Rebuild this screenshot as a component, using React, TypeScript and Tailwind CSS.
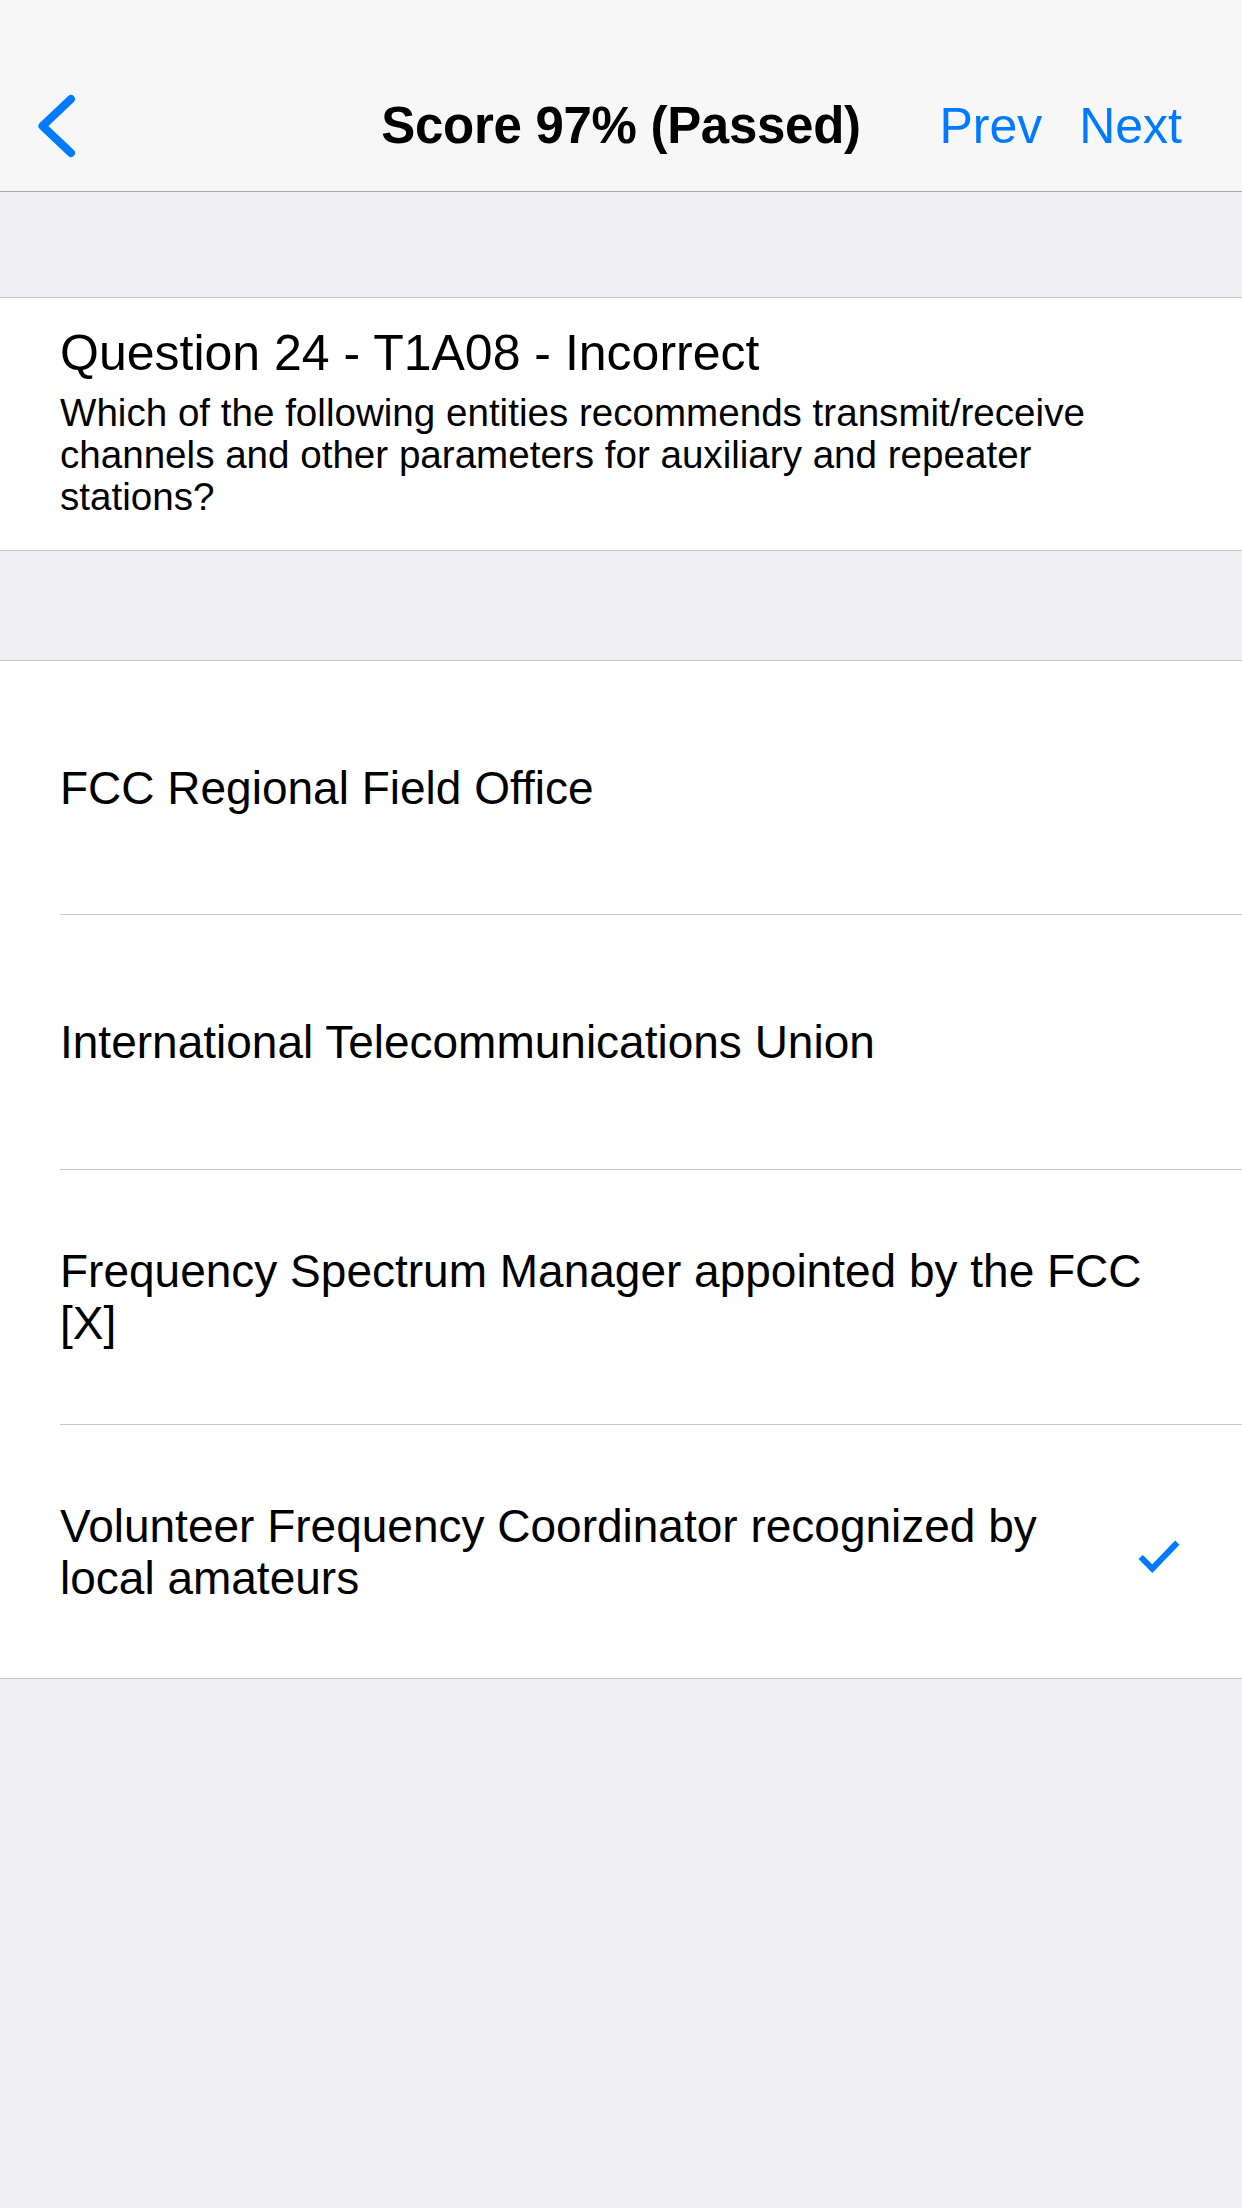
const options = [
  { text: "FCC Regional Field Office", checked: false },
  { text: "International Telecommunications Union", checked: false },
  { text: "Frequency Spectrum Manager appointed by the FCC [X]", checked: false },
  { text: "Volunteer Frequency Coordinator recognized by local amateurs", checked: true },
];

function Chevron() {
  return (
    <svg width="44" height="64" viewBox="0 0 44 64" fill="none">
      <polyline
        points="37,5 8.5,32 37,59"
        stroke="#007aff"
        strokeWidth="8"
        strokeLinecap="round"
        strokeLinejoin="round"
        fill="none"
      />
    </svg>
  );
}

function Check() {
  return (
    <svg width="44" height="44" viewBox="0 0 44 44" fill="none">
      <polyline
        points="3.7,27 15.3,38.7 40.3,12.7"
        stroke="#007aff"
        strokeWidth="6"
        strokeLinecap="butt"
        strokeLinejoin="miter"
        fill="none"
      />
    </svg>
  );
}

export default function App() {
  return (
    <div className="min-h-screen w-full bg-[#efeff4] font-['Liberation_Sans',Arial,sans-serif] text-black">
      <header className="bg-[#f7f7f7] border-b border-[#a9a9ae]">
        <div className="h-[60px]" />
        <div className="h-[131px] grid grid-cols-[1fr_auto_1fr] items-center">
          <div className="pl-[34px] flex items-center">
            <Chevron />
          </div>
          <h1 className="text-[51px] font-bold leading-none tracking-[-0.3px]">Score 97% (Passed)</h1>
          <div className="flex justify-end items-center gap-[37px] pr-[60px] text-[50px] leading-none text-[#007aff]">
            <span>Prev</span>
            <span>Next</span>
          </div>
        </div>
      </header>

      <div className="h-[105px]" />

      <section className="bg-white border-y border-[#c8c7cc] pl-[60px] pr-[100px] pt-[27px] pb-[32px]">
        <div className="text-[50px] leading-[56px]">Question 24 - T1A08 - Incorrect</div>
        <div className="mt-[11px] text-[38.6px] leading-[42px]">
          Which of the following entities recommends transmit/receive channels and other parameters for auxiliary
          and repeater stations?
        </div>
      </section>

      <div className="h-[109px]" />

      <section className="bg-white border-y border-[#c8c7cc]">
        {options.map((o, i) => (
          <div key={i} className="pl-[60px]">
            <div
              className={
                i === 0
                  ? "h-[254px] border-b border-[#c8c7cc] flex items-center"
                  : i < 3
                  ? "h-[255px] border-b border-[#c8c7cc] flex items-center"
                  : "h-[253px] flex items-center"
              }
            >
              {o.checked ? (
                <>
                  <div className="flex-1 pr-[37px] text-[46px] leading-[52px]">{o.text}</div>
                  <div className="mr-[61px] flex items-center">
                    <Check />
                  </div>
                </>
              ) : (
                <div className="flex-1 pr-[60px] text-[46px] leading-[52px]">{o.text}</div>
              )}
            </div>
          </div>
        ))}
      </section>
    </div>
  );
}
